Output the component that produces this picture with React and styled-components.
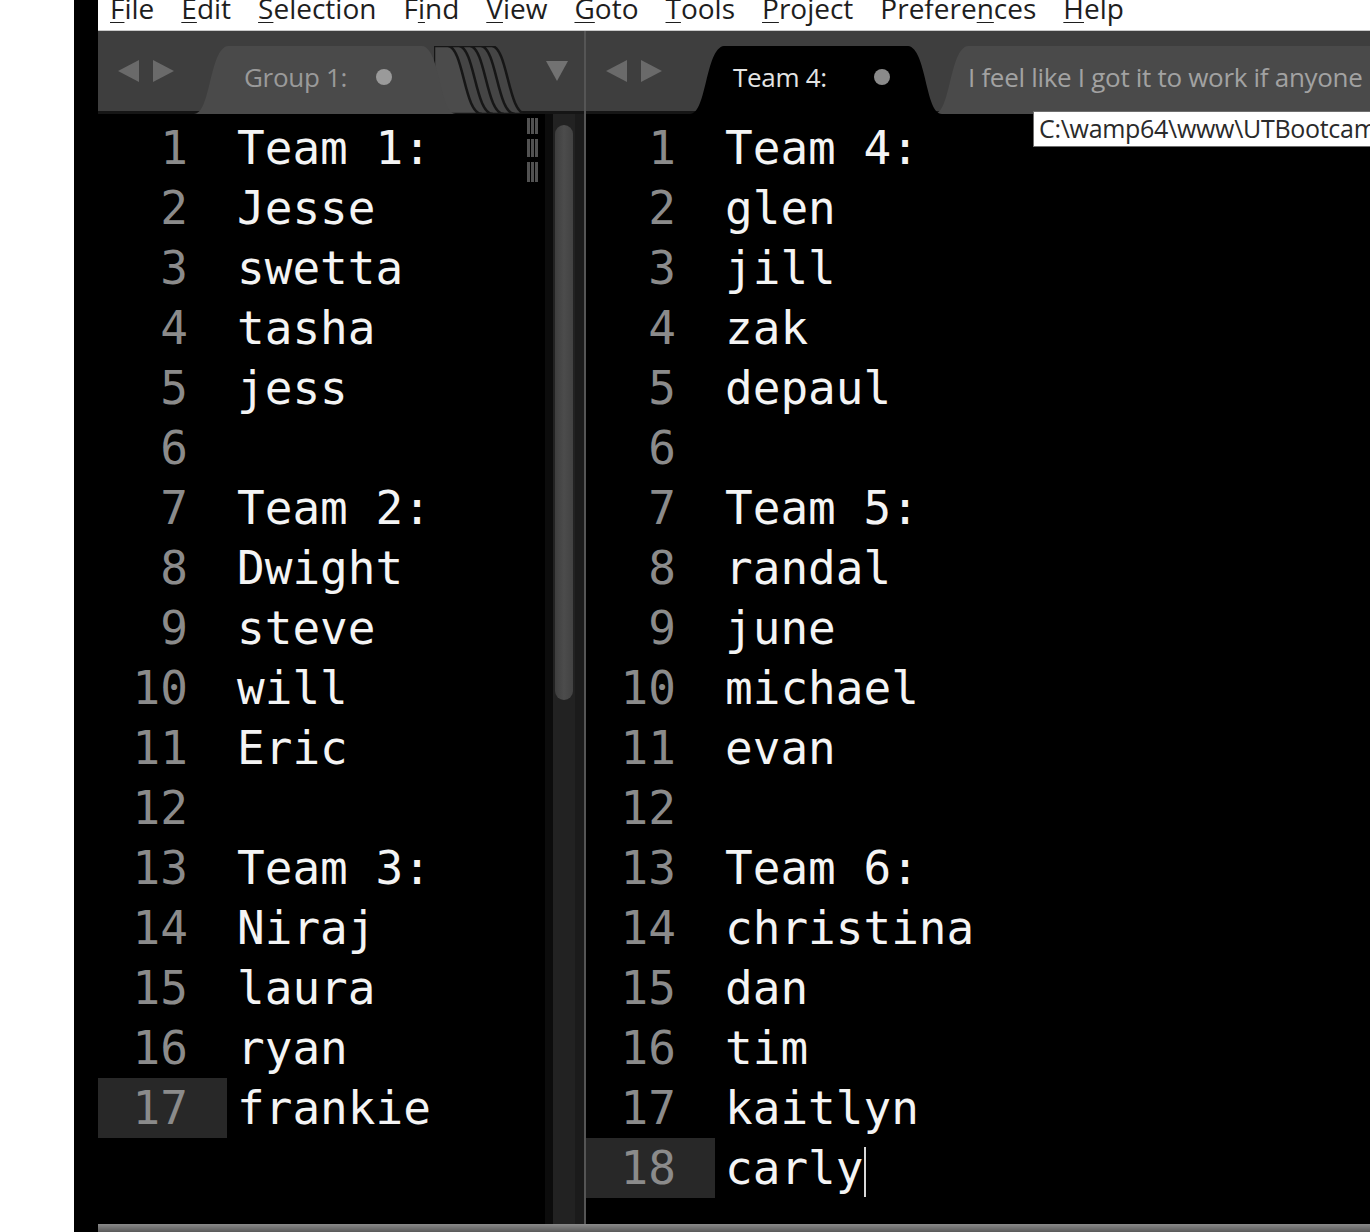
import React from 'react';
import styled, { createGlobalStyle } from 'styled-components';

const Global = createGlobalStyle`
  html, body {
    margin: 0;
    padding: 0;
    background: #fff;
    overflow: hidden;
  }
`;

const Page = styled.div`
  display: flex;
  width: 1370px;
  height: 1232px;
  overflow: hidden;
`;

const Margin = styled.div`
  width: 74px;
  flex-shrink: 0;
  background: #fff;
`;

const Bezel = styled.div`
  width: 24px;
  flex-shrink: 0;
  background: #000;
`;

const Window = styled.div`
  position: relative;
  flex: 1;
  min-width: 0;
  display: flex;
  flex-direction: column;
  background: #000;
`;

const MenuBar = styled.div`
  height: 30px;
  flex-shrink: 0;
  display: flex;
  align-items: flex-start;
  gap: 27px;
  padding-left: 12px;
  background: #fff;
  border-bottom: 1px solid #c9c9c9;
  font-family: "Open Sans", "Noto Sans", sans-serif;
  font-size: 28px;
  line-height: 17px;
  color: #1e1e1e;
  overflow: hidden;
  white-space: nowrap;
  u {
    text-decoration-thickness: 1px;
    text-underline-offset: 3px;
  }
`;

const TabStrip = styled.div`
  height: 83px;
  flex-shrink: 0;
  display: flex;
  background: #3e3e3e;
  box-shadow: inset 0 -3px 0 #151515;
`;

const TabGroup = styled.div`
  position: relative;
  display: flex;
  align-items: flex-end;
  width: ${p => (p.width ? `${p.width}px` : 'auto')};
  flex: ${p => (p.width ? 'none' : 1)};
  overflow: hidden;
  min-width: 0;
`;

const Arrows = styled.div`
  align-self: center;
  display: flex;
  gap: 14px;
  margin: -4px ${p => p.after}px 0 20px;
`;

const Arrow = styled.span`
  width: 0;
  height: 0;
  border-top: 11px solid transparent;
  border-bottom: 11px solid transparent;
  ${p => (p.dir === 'left' ? 'border-right' : 'border-left')}: 21px solid #6a6a6a;
`;

const tabPath = (w, h = 68, s = 34) =>
  `M0 ${h} C ${s * 0.5} ${h} ${s * 0.45} 2 ${s} 0 L ${w - s} 0 C ${w - s * 0.45} 2 ${w - s * 0.5} ${h} ${w} ${h} Z`;

const Tab = styled.div`
  position: relative;
  isolation: isolate;
  flex-shrink: 0;
  width: ${p => p.width}px;
  height: 68px;
  margin-left: ${p => p.shift || 0}px;
  z-index: ${p => p.layer || 1};
  display: flex;
  align-items: center;
  padding: 0 ${p => p.padRight || 0}px 6px ${p => p.padLeft}px;
  box-sizing: border-box;
  font-family: "Open Sans", "Noto Sans", sans-serif;
  font-size: 26px;
  letter-spacing: -0.3px;
  color: ${p => p.color};
  white-space: nowrap;
  &::before {
    content: '';
    position: absolute;
    inset: 0;
    z-index: -1;
    background: ${p => p.bg};
    clip-path: path('${p => tabPath(p.width)}');
  }
`;

const TabLabel = styled.span`
  flex: 1;
`;

const Dot = styled.span`
  width: 16px;
  height: 16px;
  border-radius: 50%;
  background: ${p => p.color};
  flex-shrink: 0;
`;

const Dropdown = styled.span`
  align-self: center;
  margin: -4px 16px 0 auto;
  width: 0;
  height: 0;
  border-left: 11px solid transparent;
  border-right: 11px solid transparent;
  border-top: 20px solid #727272;
`;

const Stack = styled.svg`
  flex-shrink: 0;
  margin-left: -22px;
  z-index: 0;
`;

const GroupDivider = styled.div`
  width: 2px;
  flex-shrink: 0;
  background: #555;
`;

const Editors = styled.div`
  flex: 1;
  display: flex;
  min-height: 0;
`;

const Editor = styled.div`
  position: relative;
  width: ${p => (p.width ? `${p.width}px` : 'auto')};
  flex: ${p => (p.width ? 'none' : 1)};
  padding-top: 4px;
  background: #000;
  font-family: "DejaVu Sans Mono", "Liberation Mono", monospace;
  font-size: 46px;
  overflow: hidden;
`;

const Line = styled.div`
  display: flex;
  height: 60px;
  line-height: 60px;
`;

const Gutter = styled.span`
  width: 129px;
  flex-shrink: 0;
  box-sizing: border-box;
  padding-right: 39px;
  text-align: right;
  color: #8b8b8b;
  background: ${p => (p.current ? '#282828' : 'transparent')};
`;

const Code = styled.span`
  padding-left: 10px;
  color: #f4f4f4;
  white-space: pre;
`;

const Caret = styled.span`
  display: inline-block;
  width: 2px;
  height: 50px;
  margin-left: 1px;
  vertical-align: middle;
  background: #d8d8d8;
`;

const Minimap = styled.div`
  position: absolute;
  top: 4px;
  right: 6px;
  width: 12px;
  display: flex;
  flex-direction: column;
  gap: 5px;
`;

const MiniBlock = styled.div`
  height: ${p => p.h}px;
  background: repeating-linear-gradient(90deg, #6d6d6d 0 3px, transparent 3px 4px);
  opacity: 0.75;
`;

const ScrollTrack = styled.div`
  width: 39px;
  flex-shrink: 0;
  box-sizing: border-box;
  padding: 11px 0 0 10px;
  background: linear-gradient(90deg, #0c0c0c 0 8px, #222 8px 30px, #1b1b1b 30px);
`;

const Thumb = styled.div`
  width: 18px;
  height: 575px;
  border-radius: 9px;
  background: linear-gradient(90deg, #3e3e3e, #4c4c4c 50%, #424242);
`;

const StatusBar = styled.div`
  height: 8px;
  flex-shrink: 0;
  background: linear-gradient(#8a8a8a, #5a5a5a);
`;

const Tooltip = styled.div`
  position: absolute;
  top: 111px;
  left: 935px;
  width: 400px;
  height: 36px;
  box-sizing: border-box;
  padding-left: 5px;
  background: #fff;
  border: 1px solid #6e6e6e;
  font-family: "Open Sans", "Noto Sans", sans-serif;
  font-size: 25px;
  letter-spacing: -0.3px;
  line-height: 33px;
  color: #2a2a2a;
  white-space: nowrap;
  z-index: 5;
`;

const menu = [
  ['', 'F', 'ile'],
  ['', 'E', 'dit'],
  ['', 'S', 'election'],
  ['F', 'i', 'nd'],
  ['', 'V', 'iew'],
  ['', 'G', 'oto'],
  ['', 'T', 'ools'],
  ['', 'P', 'roject'],
  ['Prefere', 'n', 'ces'],
  ['', 'H', 'elp'],
];

const left = ['Team 1:', 'Jesse', 'swetta', 'tasha', 'jess', '', 'Team 2:', 'Dwight', 'steve', 'will', 'Eric', '', 'Team 3:', 'Niraj', 'laura', 'ryan', 'frankie'];
const right = ['Team 4:', 'glen', 'jill', 'zak', 'depaul', '', 'Team 5:', 'randal', 'june', 'michael', 'evan', '', 'Team 6:', 'christina', 'dan', 'tim', 'kaitlyn', 'carly'];

function TabStack() {
  const layers = [4, 3, 2, 1, 0];
  return (
    <Stack width="110" height="68" viewBox="0 0 110 68">
      {layers.map(i => {
        const o = i * 11;
        return (
          <path
            key={i}
            d={`M0 0 L${14 + o} 0 C${30 + o} 2 ${30 + o} 68 ${48 + o} 68 L0 68 Z`}
            fill={i === 0 ? '#4b4b4b' : '#454545'}
            stroke="#161616"
            strokeWidth="2.5"
          />
        );
      })}
    </Stack>
  );
}

function Pane({ lines, current, caret, width }) {
  return (
    <Editor width={width}>
      {lines.map((text, i) => (
        <Line key={i}>
          <Gutter current={i + 1 === current}>{i + 1}</Gutter>
          <Code>
            {text}
            {caret && i + 1 === current && <Caret />}
          </Code>
        </Line>
      ))}
      {width && (
        <Minimap>
          <MiniBlock h={16} />
          <MiniBlock h={18} />
          <MiniBlock h={20} />
        </Minimap>
      )}
    </Editor>
  );
}

export default function App() {
  return (
    <Page>
      <Global />
      <Margin />
      <Bezel />
      <Window>
        <MenuBar>
          {menu.map(([pre, key, post]) => (
            <span key={pre + key + post}>
              {pre}
              <u>{key}</u>
              {post}
            </span>
          ))}
        </MenuBar>
        <TabStrip>
          <TabGroup width={486}>
            <Arrows after={20}>
              <Arrow dir="left" />
              <Arrow dir="right" />
            </Arrows>
            <Tab width={262} padLeft={50} padRight={64} bg="#4a4a4a" color="#9a9a9a" layer={2}>
              <TabLabel>Group 1:</TabLabel>
              <Dot color="#9a9a9a" />
            </Tab>
            <TabStack />
            <Dropdown />
          </TabGroup>
          <GroupDivider />
          <TabGroup>
            <Arrows after={28}>
              <Arrow dir="left" />
              <Arrow dir="right" />
            </Arrows>
            <Tab width={252} padLeft={43} padRight={52} bg="#000" color="#e4e4e4" layer={3}>
              <TabLabel>Team 4:</TabLabel>
              <Dot color="#8a8a8a" />
            </Tab>
            <Tab width={560} shift={-8} padLeft={34} bg="#4a4a4a" color="#a2a2a2" layer={2}>
              <TabLabel>I feel like I got it to work if anyone needs help</TabLabel>
            </Tab>
          </TabGroup>
        </TabStrip>
        <Editors>
          <Pane lines={left} current={17} width={447} />
          <ScrollTrack>
            <Thumb />
          </ScrollTrack>
          <GroupDivider />
          <Pane lines={right} current={18} caret />
        </Editors>
        <StatusBar />
        <Tooltip>C:\wamp64\www\UTBootcamp\teams.txt</Tooltip>
      </Window>
    </Page>
  );
}
